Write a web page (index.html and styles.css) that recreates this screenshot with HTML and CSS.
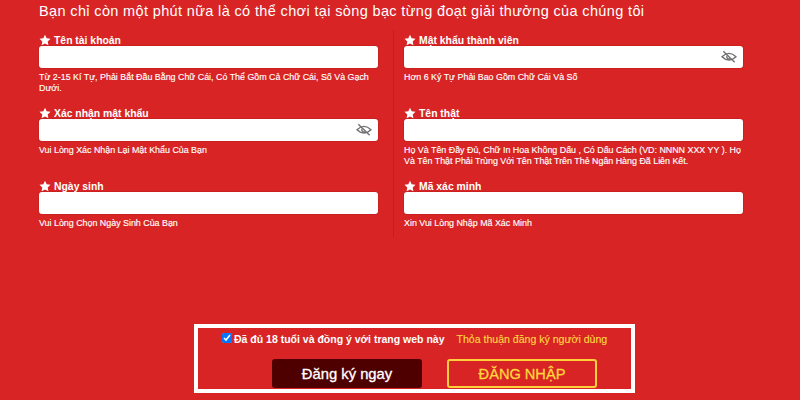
FILE: index.html
```html
<!DOCTYPE html>
<html lang="vi">
<head>
<meta charset="utf-8">
<title>Đăng ký</title>
<link rel="stylesheet" href="styles.css">
</head>
<body>
<svg class="defs" width="0" height="0" aria-hidden="true">
  <symbol id="star" viewBox="0 0 24 24"><path d="M12 1.500l3.300 7 7.700 1-5.600 5.300 1.400 7.700-6.800-3.700-6.800 3.700 1.400-7.700L1 9.500l7.700-1z" fill="#fff"/></symbol>
  <symbol id="eye" viewBox="0 0 24 24"><g fill="none" stroke="#6f6f6f" stroke-width="2"><path d="M1.500 11.500C5 8 8.300 6.500 12 6.500s7 1.500 10.500 5c-3.500 3.500-6.800 5-10.500 5s-7-1.500-10.500-5z"/><path d="M9 10a3.500 3.500 0 0 0 5 4.500"/><path d="M3.500 3.500l17 16.500"/></g></symbol>
</svg>
<main class="page">
  <h1 class="title">Bạn chỉ còn một phút nữa là có thể chơi tại sòng bạc từng đoạt giải thưởng của chúng tôi</h1>
  <section class="form">
    <div class="col col-left">
      <div class="field">
        <label class="label"><svg class="star"><use href="#star"/></svg>Tên tài khoản</label>
        <div class="input"></div>
        <p class="help">Từ 2-15 Kí Tự, Phải Bắt Đầu Bằng Chữ Cái, Có Thể Gồm Cả Chữ Cái, Số Và Gạch Dưới.</p>
      </div>
      <div class="field">
        <label class="label"><svg class="star"><use href="#star"/></svg>Xác nhận mật khẩu</label>
        <div class="input"><svg class="eye"><use href="#eye"/></svg></div>
        <p class="help">Vui Lòng Xác Nhận Lại Mật Khẩu Của Bạn</p>
      </div>
      <div class="field">
        <label class="label"><svg class="star"><use href="#star"/></svg>Ngày sinh</label>
        <div class="input"></div>
        <p class="help">Vui Lòng Chọn Ngày Sinh Của Bạn</p>
      </div>
    </div>
    <div class="col col-right">
      <div class="field">
        <label class="label"><svg class="star"><use href="#star"/></svg>Mật khẩu thành viên</label>
        <div class="input"><svg class="eye"><use href="#eye"/></svg></div>
        <p class="help">Hơn 6 Ký Tự Phải Bao Gồm Chữ Cái Và Số</p>
      </div>
      <div class="field">
        <label class="label"><svg class="star"><use href="#star"/></svg>Tên thật</label>
        <div class="input"></div>
        <p class="help">Họ Và Tên Đầy Đủ, Chữ In Hoa Không Dấu , Có Dấu Cách (VD: NNNN XXX YY ). Họ Và Tên Thật Phải Trùng Với Tên Thật Trên Thẻ Ngân Hàng Đã Liên Kết.</p>
      </div>
      <div class="field">
        <label class="label"><svg class="star"><use href="#star"/></svg>Mã xác minh</label>
        <div class="input"></div>
        <p class="help">Xin Vui Lòng Nhập Mã Xác Minh</p>
      </div>
    </div>
  </section>
  <section class="submit">
    <div class="agree">
      <input class="check" type="checkbox" checked>
      <span class="agree-text">Đã đủ 18 tuổi và đồng ý với trang web này</span>
      <a class="terms">Thỏa thuận đăng ký người dùng</a>
    </div>
    <div class="buttons">
      <button class="btn btn-dark">Đăng ký ngay</button>
      <button class="btn btn-outline">ĐĂNG NHẬP</button>
    </div>
  </section>
</main>
</body>
</html>
```
FILE: styles.css
```css
* { box-sizing: border-box; }
html, body { margin: 0; height: 100%; }
body {
  background: #d82424;
  color: #fff;
  font-family: "Liberation Sans", Arial, sans-serif;
  overflow: hidden;
}
.defs { position: absolute; }
.page { width: 800px; height: 400px; display: flex; flex-direction: column; }
.title {
  margin: 0;
  padding: 3px 0 0 39px;
  height: 30px;
  font-size: 14.5px;
  line-height: 17px;
  font-weight: 400;
  letter-spacing: 0.36px;
}
.form { display: flex; height: 207px; }
.col { width: 355px; padding-top: 3px; }
.col-left { margin-left: 39px; border-right: 1px solid #c21e1e; padding-right: 15px; }
.col-right { margin-left: 10px; width: 339px; }
.field { height: 73px; }
.label {
  display: flex;
  align-items: center;
  height: 13px;
  padding-top: 2px;
  font-size: 10.4px;
  line-height: 11px;
  font-weight: 700;
}
.star { width: 12px; height: 12px; margin: 0 3px 2px 0; }
.input {
  display: flex;
  align-items: center;
  justify-content: flex-end;
  height: 22px;
  background: #fff;
  border-radius: 3px;
  padding-right: 6px;
  box-shadow: 0 0 0 1px rgba(150, 20, 20, 0.2);
}
.eye { width: 16px; height: 16px; }
.help {
  margin: 4px 0 0;
  font-size: 8.9px;
  line-height: 11px;
  -webkit-text-stroke: 0.15px #fff;
}
.submit {
  align-self: flex-start;
  margin: 87px 0 0 194px;
  width: 441px;
  height: 69px;
  border: 4px solid #fff;
  display: flex;
  flex-direction: column;
  align-items: flex-start;
}
.agree {
  display: flex;
  align-items: center;
  height: 20px;
  padding: 1px 0 0 24px;
  font-size: 10.5px;
  font-weight: 700;
}
.check { margin: 0 2px 2px 0; width: 10px; height: 10px; }
.terms { margin: 1px 0 0 12px; color: #ffd83c; font-weight: 400; font-size: 10.55px; -webkit-text-stroke: 0.15px #ffd83c; }
.buttons { display: flex; gap: 25px; padding: 11px 0 0 74px; }
.btn {
  width: 150px;
  height: 29px;
  border-radius: 3px;
  font-family: inherit;
  font-size: 14.6px;
  padding: 0;
  -webkit-text-stroke: 0.3px currentColor;
}
.btn-dark { background: #4e0000; border: 0; color: #fff; font-size: 14.8px; }
.btn-outline { background: transparent; border: 2px solid #ffcf3c; color: #ffd83c; font-weight: 400; }
```
